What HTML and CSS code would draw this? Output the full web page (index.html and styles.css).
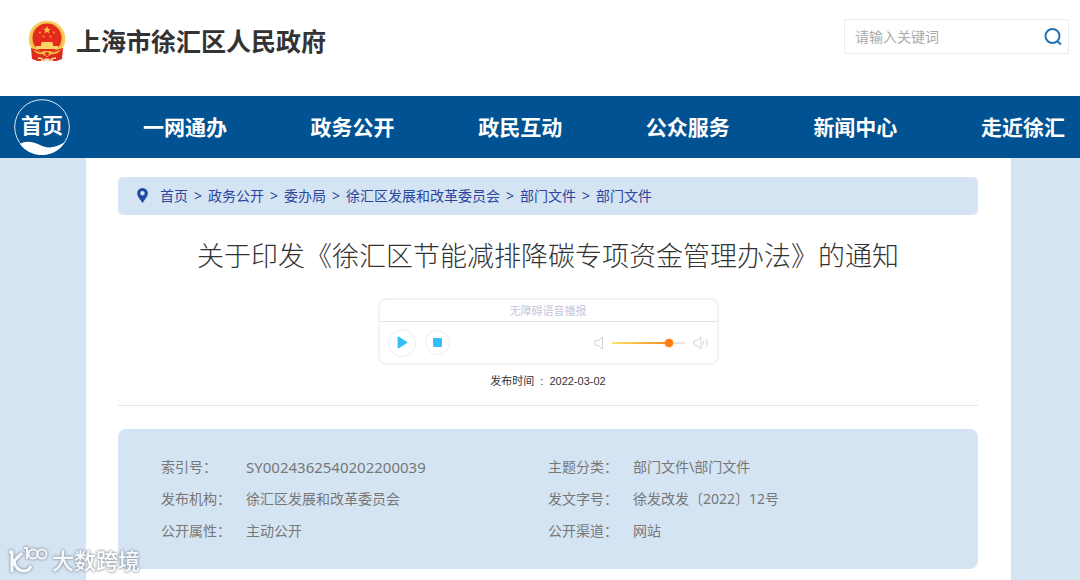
FILE: index.html
```html
<!DOCTYPE html>
<html lang="zh-CN">
<head>
<meta charset="utf-8">
<meta name="viewport" content="width=device-width, initial-scale=1">
<title>上海市徐汇区人民政府</title>
<link rel="stylesheet" href="styles.css">
</head>
<body>
<header class="header">
  <div class="brand">
    <svg class="emblem" viewBox="0 0 38 42" aria-hidden="true">
      <path d="M4 27L5 39l5 2 9-1 9 1 5-2 1-12z" fill="#d9291c"/>
      <circle cx="19" cy="19" r="18.300" fill="#f5c04a"/>
      <circle cx="19" cy="19" r="17.300" fill="none" stroke="#fad977" stroke-width="1"/>
      <circle cx="19" cy="18" r="14.500" fill="#e32a1c"/>
      <path d="M19 6l1.100 2.700 2.900.1-2.300 1.800.8 2.800-2.500-1.600-2.500 1.600.8-2.800-2.300-1.800 2.900-.1z" fill="#f9c846"/>
      <g fill="#f4a53c"><circle cx="12" cy="12.500" r="1"/><circle cx="26" cy="12.500" r="1"/><circle cx="15.500" cy="16.500" r="1"/><circle cx="22.500" cy="16.500" r="1"/></g>
      <path d="M13 24l1-2h10l1 2v2h5v3H8v-3h5z" fill="#fbd468"/>
      <path d="M3 28l7 2 5 2h8l5-2 7-2-1 11-6 2-9-1-9 1-6-2z" fill="#dd2b1d"/>
      <path d="M5 29q6 5 11 2h6q5 3 11-2-3 6-9 5l-5 3-5-3q-6 1-9-5z" fill="#f5b93f"/>
      <circle cx="19" cy="34" r="2" fill="#dd2b1d"/>
      <path d="M10 38l4 .5v2.500M28 38l-4 .5v2.500M15 40.500q4-3 8 0" fill="none" stroke="#f9e3a6" stroke-width="1.400"/>
    </svg>
    <span class="brand-name">上海市徐汇区人民政府</span>
  </div>
  <form class="search">
    <input class="search-input" type="text" placeholder="请输入关键词" aria-label="请输入关键词">
    <button class="search-button" type="button" aria-label="搜索">
      <svg viewBox="0 0 18 18" width="18" height="18" fill="none" stroke="#2474b5" stroke-width="2"><circle cx="8.500" cy="8" r="7"/><path d="M13 13l4 3.500"/></svg>
    </button>
  </form>
</header>

<nav class="nav">
  <a class="home" href="#">
    <svg class="home-ring" viewBox="0 0 56 56" aria-hidden="true">
      <circle cx="28" cy="28" r="27.300" fill="none" stroke="#dce9f4" stroke-width="1"/>
      <path d="M6 45C12 41 20 43 26 46C33 50 42 49 51 43C46 51 38 56 28 56C18 56 10 51 6 45Z" fill="#fff"/>
    </svg>
    <span class="home-text">首页</span>
  </a>
  <div class="nav-links">
    <a href="#">一网通办</a>
    <a href="#">政务公开</a>
    <a href="#">政民互动</a>
    <a href="#">公众服务</a>
    <a href="#">新闻中心</a>
    <a href="#">走近徐汇</a>
  </div>
</nav>

<div class="page">
  <main class="content">
    <div class="crumbs">
      <svg class="pin" viewBox="0 0 10 14" aria-hidden="true"><path fill="#1f49a6" fill-rule="evenodd" d="M5 0a5 5 0 0 1 5 5c0 3-3 6-5 9C3 11 0 8 0 5a5 5 0 0 1 5-5zM5 2.800a2.100 2.100 0 1 0 0 4.200a2.100 2.100 0 0 0 0-4.200z"/></svg>
      <a href="#">首页</a><span>&gt;</span>
      <a href="#">政务公开</a><span>&gt;</span>
      <a href="#">委办局</a><span>&gt;</span>
      <a href="#">徐汇区发展和改革委员会</a><span>&gt;</span>
      <a href="#">部门文件</a><span>&gt;</span>
      <a href="#">部门文件</a>
    </div>

    <h1 class="title">关于印发《徐汇区节能减排降碳专项资金管理办法》的通知</h1>

    <section class="player">
      <div class="player-head">无障碍语音播报</div>
      <div class="player-body">
        <button class="round play" type="button" aria-label="播放"><svg viewBox="0 0 10 12" width="11" height="13"><path d="M1 1v10l8-5z" fill="#33bdfb" stroke="#33bdfb" stroke-linejoin="round"/></svg></button>
        <button class="round stop" type="button" aria-label="停止"><svg viewBox="0 0 9 9" width="9" height="9"><rect width="9" height="9" rx="1" fill="#33bdfb"/></svg></button>
        <div class="volume">
          <svg viewBox="0 0 16 14" width="16" height="14" fill="none" stroke="#d3d3d8"><path d="M8 4.500h2.500l4-3.500v12l-4-3.500H8q-1 0-1-1v-3q0-1 1-1z"/></svg>
          <input class="slider" type="range" min="0" max="100" value="82" aria-label="音量">
          <svg viewBox="0 0 16 14" width="16" height="14" fill="none" stroke="#d3d3d8"><path d="M2 4.500h2l4-3.500v12l-4-3.500H2q-1 0-1-1v-3q0-1 1-1zM10 5q1.500 2 0 4M12.500 3q3.500 4 0 8"/></svg>
        </div>
      </div>
    </section>

    <p class="date"><span>发布时间</span><span>:</span><time datetime="2022-03-02">2022-03-02</time></p>

    <dl class="info">
      <div class="pair"><dt>索引号：</dt><dd class="code">SY0024362540202200039</dd></div>
      <div class="pair"><dt>主题分类：</dt><dd>部门文件\部门文件</dd></div>
      <div class="pair"><dt>发布机构：</dt><dd>徐汇区发展和改革委员会</dd></div>
      <div class="pair"><dt>发文字号：</dt><dd>徐发改发〔2022〕12号</dd></div>
      <div class="pair"><dt>公开属性：</dt><dd>主动公开</dd></div>
      <div class="pair"><dt>公开渠道：</dt><dd>网站</dd></div>
    </dl>
  </main>
</div>

<div class="watermark">
  <svg viewBox="0 0 40 28" width="40" height="28" fill="none" stroke="#fff" stroke-width="3" aria-hidden="true"><path d="M1 6h3v20M14 7L6 15q2 10 10 10 5 0 7-5" /><path d="M16 2h3v11" stroke-width="2"/><circle cx="25" cy="8" r="4.500" stroke-width="2"/><circle cx="34" cy="8" r="4.500" stroke-width="2"/></svg>
  <span>大数跨境</span>
</div>
</body>
</html>
```
FILE: styles.css
```css
* {
  box-sizing: border-box;
}

body {
  margin: 0;
  min-height: 100vh;
  display: flex;
  flex-direction: column;
  background: #fff;
  font-family: "Noto Sans", "Noto Sans CJK SC", sans-serif;
  font-size: 14px;
}

a {
  color: inherit;
  text-decoration: none;
}

button {
  padding: 0;
  border: 0;
  background: none;
}

.header {
  display: flex;
  justify-content: space-between;
  align-items: flex-start;
  padding: 19px 11px 0 28px;
  height: 96px;
}

.brand {
  display: flex;
  align-items: center;
  gap: 10px;
}

.emblem {
  width: 38px;
  height: 42px;
}

.brand-name {
  font-size: 25px;
  line-height: 44px;
  font-weight: 700;
  color: #333;
}

.search {
  display: flex;
  align-items: center;
  width: 225px;
  height: 35px;
  border: 1px solid #e6eef0;
}

.search-input {
  flex: 1;
  min-width: 0;
  padding: 0 0 0 10px;
  border: 0;
  outline: 0;
  background: none;
  font: inherit;
}

.search-input::placeholder {
  color: #aaa;
}

.search-button {
  display: flex;
  padding: 0 6px;
}

.nav {
  display: flex;
  align-items: center;
  height: 62px;
  padding: 0 15px 0 14px;
  background: #005293;
  color: #fff;
  font-weight: 700;
  font-size: 21px;
}

.home {
  position: relative;
  width: 56px;
  height: 56px;
  text-align: center;
}

.home-ring {
  position: absolute;
  inset: 0;
}

.home-text {
  line-height: 52px;
}

.nav-links {
  flex: 1;
  display: flex;
  justify-content: space-between;
  margin-left: 73px;
  padding-bottom: 2px;
}

.page {
  flex: 1;
  display: flex;
  padding: 0 69px 0 86px;
  background: #d5e4f2;
}

.content {
  flex: 1;
  padding: 19px 33px 11px 32px;
  background: #fff;
}

.crumbs {
  display: flex;
  align-items: center;
  gap: 6px;
  height: 38px;
  padding: 0 0 2px 19px;
  border-radius: 5px;
  background: #d5e4f2;
  color: #2b46a0;
}

.pin {
  width: 11px;
  height: 15px;
  margin-right: 6px;
}

.title {
  margin: 20px 0 0;
  font-family: "Noto Sans CJK SC", sans-serif;
  font-size: 27px;
  line-height: 40px;
  font-weight: 300;
  text-align: center;
  color: #333;
}

.player {
  width: 341px;
  margin: 23px auto 0;
  border: 2px solid #f3f3f5;
  border-radius: 8px;
}

.player-head {
  height: 22px;
  border-bottom: 1px solid #dfe3ef;
  font-size: 11px;
  line-height: 22px;
  text-align: center;
  color: #c5c7dc;
}

.player-body {
  display: flex;
  align-items: center;
  gap: 9px;
  height: 41px;
  padding: 0 8px;
}

.round {
  display: flex;
  align-items: center;
  justify-content: center;
  border: 1px solid #ececf0;
  border-radius: 50%;
}

.play {
  width: 28px;
  height: 28px;
  padding-left: 2px;
}

.stop {
  width: 25px;
  height: 25px;
}

.volume {
  display: flex;
  align-items: center;
  gap: 8px;
  margin-left: auto;
}

.slider {
  appearance: none;
  width: 73px;
  height: 12px;
  margin: 0;
  background: linear-gradient(90deg, #fbe36a, #f78a1d 78%, #e8e8e8 78%) center / 100% 2px no-repeat;
}

.slider::-webkit-slider-thumb {
  appearance: none;
  width: 8px;
  height: 8px;
  border-radius: 50%;
  background: #ff7f0e;
  box-shadow: 0 0 2px #ff9d45;
}

.date {
  display: flex;
  justify-content: center;
  gap: 6px;
  margin: 0;
  padding: 8px 0 16px;
  border-bottom: 1px solid #e6e6e6;
  font-family: "Liberation Sans", "Noto Sans CJK SC", sans-serif;
  font-size: 11px;
  line-height: 16px;
  color: #333;
}

.info {
  display: grid;
  grid-template-columns: 9fr 10fr;
  margin: 23px 0 0;
  padding: 22px 0 22px 43px;
  border-radius: 8px;
  background: #d5e4f2;
  color: #777;
  line-height: 32px;
}

.pair {
  display: flex;
}

.pair dt {
  width: 85px;
}

.pair dd {
  margin: 0;
}

.pair .code {
  font-size: 15px;
}

.watermark {
  position: fixed;
  left: 8px;
  bottom: 5px;
  display: flex;
  align-items: center;
  gap: 4px;
  color: #fff;
  font-size: 22px;
  line-height: 30px;
  font-weight: 500;
  opacity: 0.8;
  filter: drop-shadow(0 0 1px #8a949e) drop-shadow(0 0 1px #8a949e);
}
```
